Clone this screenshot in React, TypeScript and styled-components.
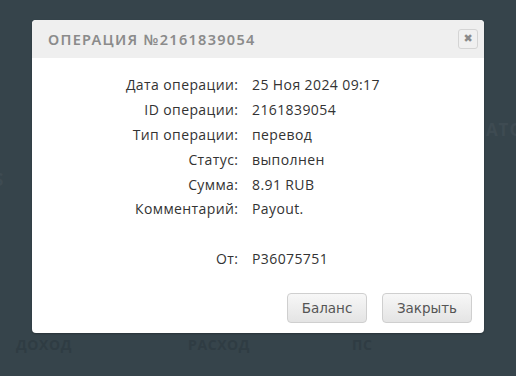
import * as React from "react";
import styled, { createGlobalStyle } from "styled-components";

const GlobalStyle = createGlobalStyle`
  html, body {
    margin: 0;
    padding: 0;
    width: 516px;
    height: 376px;
    overflow: hidden;
    background: #36444b;
  }
`;

const Page = styled.div`
  position: relative;
  width: 516px;
  height: 376px;
  font-family: "Open Sans", "Noto Sans", sans-serif;
`;

const Backdrop = styled.div`
  display: flex;
  flex-direction: column;
  height: 376px;
  box-sizing: border-box;
  padding: 119px 0 22px;
  font-weight: 700;
  text-transform: uppercase;
  overflow: hidden;
`;

const SideText = styled.div<{ $align: "left" | "right" }>`
  font-size: 17px;
  line-height: 22px;
  letter-spacing: 1px;
  color: #3e4b52;
  text-align: ${(p) => p.$align};
  margin: ${(p) => (p.$align === "left" ? "28px 0 0 -6px" : "0 -8px 0 0")};
`;

const Spacer = styled.div`
  flex: 1;
`;

const StatsRow = styled.div`
  display: grid;
  grid-template-columns: 172px 164px 1fr;
  padding: 0 0 0 16px;
`;

const StatLabel = styled.div`
  font-size: 14px;
  line-height: 18px;
  letter-spacing: 0.6px;
  color: #2f3c43;
`;

const Overlay = styled.div`
  position: absolute;
  inset: 0;
  display: flex;
  justify-content: center;
  align-items: flex-start;
  padding-top: 20px;
`;

const Dialog = styled.div`
  width: 452px;
  background: #fff;
  border-radius: 4px;
  overflow: hidden;
  box-shadow: 0 1px 2px rgba(0, 0, 0, 0.25);
`;

const Header = styled.div`
  display: flex;
  align-items: center;
  justify-content: space-between;
  height: 38px;
  padding: 0 6px 0 16px;
  background: #efefef;
`;

const Title = styled.div`
  font-family: "Noto Sans", sans-serif;
  font-size: 14.5px;
  font-weight: 600;
  letter-spacing: 1.3px;
  color: #8b8b8b;
  text-transform: uppercase;
`;

const CloseButton = styled.button`
  width: 20px;
  height: 20px;
  padding: 0;
  border: 1px solid #d4d4d4;
  border-radius: 3px;
  background: #f0f0f0;
  color: #8a8a8a;
  font-size: 11px;
  line-height: 18px;
  font-family: "DejaVu Sans", sans-serif;
  font-weight: 700;
  cursor: pointer;
`;

const Body = styled.div`
  padding: 14px 0 0;
`;

const Details = styled.div`
  display: grid;
  grid-template-columns: 206px 1fr;
  column-gap: 14px;
  grid-auto-rows: 24.9px;
  align-items: center;
  font-size: 14px;
  letter-spacing: 0.4px;
  color: #333;
`;

const Label = styled.div`
  text-align: right;
  margin-right: -0.4px;
`;

const Value = styled.div``;

const Footer = styled.div`
  display: flex;
  justify-content: flex-end;
  gap: 15px;
  padding: 22px 12px 10px;
`;

const Button = styled.button<{ $w: number }>`
  width: ${(p) => p.$w}px;
  height: 30px;
  border: 1px solid #cfcfcf;
  border-radius: 4px;
  background: linear-gradient(#f7f7f7, #e4e4e4);
  color: #555;
  font-family: "DejaVu Sans", "Open Sans", sans-serif;
  font-size: 13.5px;
  cursor: pointer;
`;

const rows: [string, string][] = [
  ["Дата операции:", "25 Ноя 2024 09:17"],
  ["ID операции:", "2161839054"],
  ["Тип операции:", "перевод"],
  ["Статус:", "выполнен"],
  ["Сумма:", "8.91 RUB"],
  ["Комментарий:", "Payout."],
  ["", ""],
  ["От:", "P36075751"],
];

const App = () => {
  return (
    <>
      <GlobalStyle />
      <Page>
        <Backdrop>
          <SideText $align="right">Ато</SideText>
          <SideText $align="left">s</SideText>
          <Spacer />
          <StatsRow>
            <StatLabel>Доход</StatLabel>
            <StatLabel>Расход</StatLabel>
            <StatLabel>ПС</StatLabel>
          </StatsRow>
        </Backdrop>
        <Overlay>
          <Dialog>
            <Header>
              <Title>Операция №2161839054</Title>
              <CloseButton aria-label="close">✖</CloseButton>
            </Header>
            <Body>
              <Details>
                {rows.map(([label, value], i) => (
                  <React.Fragment key={i}>
                    <Label>{label}</Label>
                    <Value>{value}</Value>
                  </React.Fragment>
                ))}
              </Details>
              <Footer>
                <Button $w={80}>Баланс</Button>
                <Button $w={90}>Закрыть</Button>
              </Footer>
            </Body>
          </Dialog>
        </Overlay>
      </Page>
    </>
  );
};

export default App;
